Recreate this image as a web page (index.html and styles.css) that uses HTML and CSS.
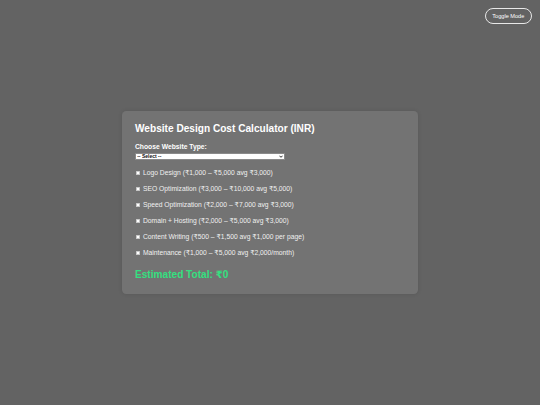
FILE: index.html
```html
<!DOCTYPE html>
<html lang="en">
<head>
<meta charset="utf-8">
<title>Website Design Cost Calculator</title>
<link rel="stylesheet" href="styles.css">
</head>
<body>
<button class="toggle">Toggle Mode</button>
<div class="card">
  <h2 class="title">Website Design Cost Calculator (INR)</h2>
  <label class="field-label" for="type">Choose Website Type:</label>
  <div class="select-wrap">
    <select id="type" class="type-select">
      <option>-- Select --</option>
    </select>
    <svg class="chev" viewBox="0 0 10 6" width="4" height="3"><path d="M1 1 L5 5 L9 1" fill="none" stroke="#111" stroke-width="2.2"/></svg>
  </div>
  <div class="options">
    <label class="opt"><input type="checkbox" class="check"><span>Logo Design (₹1,000 – ₹5,000 avg ₹3,000)</span></label>
    <label class="opt"><input type="checkbox" class="check"><span>SEO Optimization (₹3,000 – ₹10,000 avg ₹5,000)</span></label>
    <label class="opt"><input type="checkbox" class="check"><span>Speed Optimization (₹2,000 – ₹7,000 avg ₹3,000)</span></label>
    <label class="opt"><input type="checkbox" class="check"><span>Domain + Hosting (₹2,000 – ₹5,000 avg ₹3,000)</span></label>
    <label class="opt"><input type="checkbox" class="check"><span>Content Writing (₹500 – ₹1,500 avg ₹1,000 per page)</span></label>
    <label class="opt"><input type="checkbox" class="check"><span>Maintenance (₹1,000 – ₹5,000 avg ₹2,000/month)</span></label>
  </div>
  <div class="total">Estimated Total: ₹0</div>
</div>
</body>
</html>
```

FILE: styles.css
```css
html, body {
  margin: 0;
  padding: 0;
}
body {
  background: #636363;
  font-family: "Liberation Sans", Arial, "DejaVu Sans", sans-serif;
  color: #f2f2f2;
  min-height: 100vh;
  display: flex;
  align-items: center;
  justify-content: center;
}
.toggle {
  position: absolute;
  top: 7.5px;
  right: 8px;
  font-family: "Liberation Sans", Arial, sans-serif;
  font-size: 5.6px;
  line-height: 6.4px;
  padding: 4.2px 6.7px;
  color: #fff;
  background: transparent;
  border: 1px solid #e8e8e8;
  border-radius: 9px;
  margin: 0;
}
.card {
  width: 295.3px;
  box-sizing: border-box;
  background: #737373;
  border-radius: 4.2px;
  padding: 12.3px 12.66px 13.2px;
  box-shadow: 0 0 4px rgba(0, 0, 0, 0.12);
}
.title {
  margin: 0 0 7.8px;
  font-size: 10.125px;
  line-height: 11.64px;
  font-weight: bold;
  color: #fff;
}
.field-label {
  display: block;
  font-size: 6.75px;
  line-height: 7.76px;
  font-weight: bold;
  color: #fff;
  margin-bottom: 2.6px;
}
.select-wrap {
  position: relative;
  width: 150px;
  height: 7.4px;
}
.type-select {
  appearance: none;
  -webkit-appearance: none;
  display: block;
  width: 150px;
  height: 7.4px;
  font-family: "Liberation Sans", Arial, sans-serif;
  font-size: 5px;
  line-height: 5px;
  font-weight: bold;
  padding: 0 1.2px;
  margin: 0;
  border: 0.6px solid #8a8a8a;
  border-radius: 1px;
  background: #fff;
  color: #111;
  box-sizing: border-box;
}
.chev {
  position: absolute;
  right: 2.2px;
  top: 2.3px;
  pointer-events: none;
}
.options {
  display: flex;
  flex-direction: column;
  gap: 8.1px;
  margin-top: 8.6px;
}
.opt {
  display: flex;
  align-items: center;
  height: 7.9px;
  font-size: 6.75px;
  line-height: 7.9px;
  color: #f0f0f0;
}
.check {
  appearance: none;
  -webkit-appearance: none;
  width: 4.6px;
  height: 4.6px;
  margin: 0 2.6px 0 0.7px;
  background: #fff;
  border: 0.5px solid #c8c8c8;
  border-radius: 0.6px;
  box-sizing: border-box;
  flex: none;
}
.total {
  margin-top: 12.55px;
  font-size: 10.125px;
  line-height: 11.64px;
  font-weight: bold;
  color: #33e080;
}
```
